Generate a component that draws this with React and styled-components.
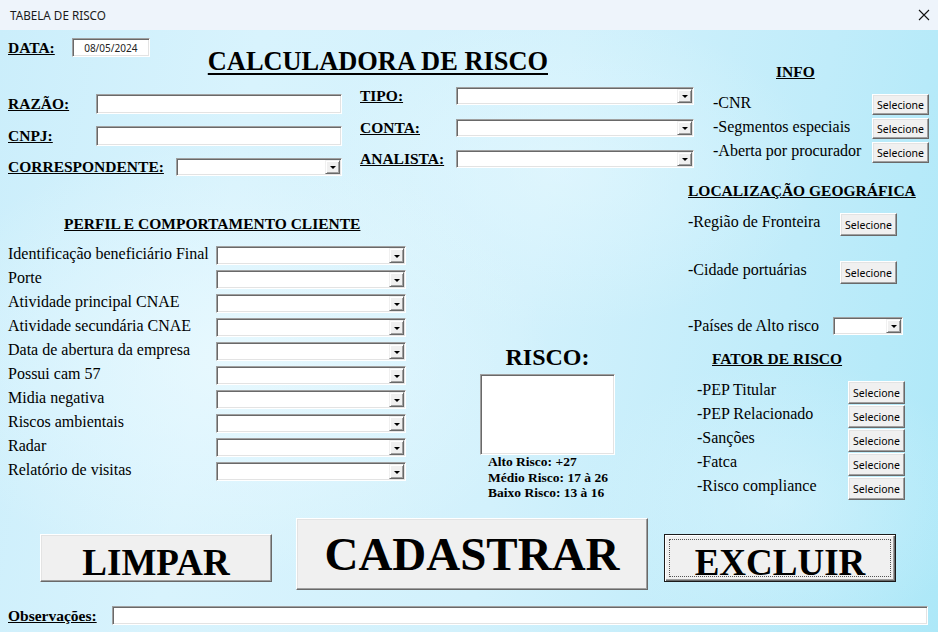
import React from "react";
import styled, { createGlobalStyle } from "styled-components";

const GlobalStyle = createGlobalStyle`
  html, body {
    margin: 0;
    padding: 0;
    overflow: hidden;
  }
  body {
    font-family: "Liberation Serif", "Times New Roman", serif;
    color: #000;
  }
`;

const serif = `"Liberation Serif", "Times New Roman", serif`;
const sans = `"Noto Sans", "Open Sans", Arial, sans-serif`;

const Window = styled("div")`
  width: 938px;
  height: 632px;
  display: flex;
  flex-direction: column;
  overflow: hidden;
`;

const TitleBar = styled("div")`
  height: 30px;
  flex-shrink: 0;
  background: #eef4fb;
  display: flex;
  align-items: center;
  justify-content: space-between;
  padding: 0 8px 0 10px;
`;

const TitleText = styled("span")`
  font-family: ${sans};
  font-size: 11.7px;
  color: #1a1a1a;
`;

const Body = styled("div")`
  flex: 1;
  display: flex;
  flex-direction: column;
  background:
    radial-gradient(ellipse 320px 220px at 230px 330px, rgba(236, 250, 255, 0.75), transparent),
    radial-gradient(ellipse 260px 160px at 560px 140px, rgba(232, 249, 255, 0.55), transparent),
    radial-gradient(ellipse 200px 140px at 780px 470px, rgba(220, 245, 253, 0.5), transparent),
    linear-gradient(100deg, #cbeefb 0%, #d8f3fd 25%, #d2f1fc 55%, #c0ecfa 80%, #ade8f8 100%);
`;

const Top = styled("div")`
  height: 488px;
  display: flex;
  flex-shrink: 0;
`;

const LeftPane = styled("div")`
  width: 688px;
  flex-shrink: 0;
  padding-left: 8px;
  box-sizing: border-box;
`;

const HeaderRow = styled("div")`
  display: flex;
  align-items: flex-start;
  padding-top: 8px;
`;

const DataGroup = styled("div")`
  display: flex;
  align-items: center;
  gap: 17px;
`;

const Label = styled("span")`
  font-family: ${serif};
  font-weight: bold;
  font-size: 15.5px;
  line-height: 18px;
  text-decoration: underline;
  width: ${(p) => (p.$w ? `${p.$w}px` : "auto")};
  flex-shrink: 0;
`;

const MainTitle = styled("h1")`
  margin: 8px 0 0 58px;
  font-family: ${serif};
  font-weight: bold;
  font-size: 26.4px;
  line-height: 30px;
  text-decoration: underline;
  text-decoration-thickness: 2px;
  text-underline-offset: 3px;
  white-space: nowrap;
`;

const TextBox = styled("input")`
  width: ${(p) => p.$w}px;
  height: ${(p) => p.$h || 20}px;
  box-sizing: border-box;
  margin: 0;
  padding: 0 2px;
  background: #fff;
  border: 1px solid;
  border-color: #a0a0a0 #fff #fff #a0a0a0;
  box-shadow: inset 1px 1px 0 #696969, inset -1px -1px 0 #e3e3e3;
  font-family: ${sans};
  font-size: 10px;
  color: #222;
  text-align: ${(p) => (p.$center ? "center" : "left")};
  outline: none;
  flex-shrink: 0;
`;

const ComboBox = styled("div")`
  width: ${(p) => p.$w}px;
  height: ${(p) => p.$h || 18}px;
  box-sizing: border-box;
  background: #fff;
  border: 1px solid;
  border-color: #a0a0a0 #fff #fff #a0a0a0;
  box-shadow: inset 1px 1px 0 #696969, inset -1px -1px 0 #e3e3e3;
  display: flex;
  justify-content: flex-end;
  padding: 1px;
  flex-shrink: 0;
`;

const ComboArrow = styled("div")`
  width: 15px;
  height: 100%;
  box-sizing: border-box;
  background: #f0f0f0;
  border: 1px solid;
  border-color: #f0f0f0 #696969 #696969 #f0f0f0;
  box-shadow: inset 1px 1px 0 #fff, inset -1px -1px 0 #a0a0a0;
  display: flex;
  align-items: center;
  justify-content: center;

  &::after {
    content: "";
    width: 0;
    height: 0;
    margin-top: 1px;
    border-left: 3px solid transparent;
    border-right: 3px solid transparent;
    border-top: 3px solid #000;
  }
`;

const Combo = ({ w, h }) => (
  <ComboBox $w={w} $h={h}>
    <ComboArrow />
  </ComboBox>
);

const FieldsRow = styled("div")`
  display: flex;
  margin-top: 11px;
`;

const FieldCol = styled("div")`
  width: 334px;
  flex-shrink: 0;
  display: flex;
  flex-direction: column;
  gap: ${(p) => p.$gap}px;
  padding-top: ${(p) => p.$pt || 0}px;
  margin-left: ${(p) => p.$ml || 0}px;
`;

const FieldRow = styled("div")`
  display: flex;
  align-items: center;
`;

const LowerRow = styled("div")`
  display: flex;
  margin-top: 39px;
`;

const PerfilCol = styled("div")`
  width: 398px;
  flex-shrink: 0;
`;

const SectionTitle = styled("div")`
  font-family: ${serif};
  font-weight: bold;
  font-size: 15.5px;
  line-height: 18px;
  text-decoration: underline;
  white-space: nowrap;
  margin-left: ${(p) => p.$ml || 0}px;
  margin-top: ${(p) => p.$mt || 0}px;
`;

const PerfilList = styled("div")`
  margin-top: 13px;
  display: flex;
  flex-direction: column;
  gap: 5px;
`;

const PerfilRow = styled("div")`
  display: flex;
  align-items: flex-start;
  height: 19px;
`;

const PlainLabel = styled("span")`
  font-family: ${serif};
  font-size: 16px;
  line-height: 18px;
  white-space: nowrap;
  width: ${(p) => (p.$w ? `${p.$w}px` : "auto")};
  margin-top: ${(p) => p.$mt || 0}px;
  flex-shrink: 0;
`;

const RiscoCol = styled("div")`
  margin: 128px 0 0 74px;
  width: 135px;
  display: flex;
  flex-direction: column;
  align-items: center;
`;

const RiscoTitle = styled("div")`
  font-family: ${serif};
  font-weight: bold;
  font-size: 24px;
  line-height: 28px;
`;

const RiscoBox = styled("div")`
  margin-top: 3px;
  width: 135px;
  height: 81px;
  box-sizing: border-box;
  background: #fff;
  border: 1px solid;
  border-color: #a0a0a0 #fff #fff #a0a0a0;
  box-shadow: inset 1px 1px 0 #696969, inset -1px -1px 0 #e3e3e3;
`;

const Legend = styled("div")`
  align-self: stretch;
  padding-left: 8px;
  margin-top: -1px;
  font-family: ${serif};
  font-weight: bold;
  font-size: 13.5px;
  line-height: 15.5px;
  white-space: nowrap;
`;

const RightPane = styled("div")`
  flex: 1;
  padding-top: 33px;
`;

const OptionList = styled("div")`
  display: flex;
  flex-direction: column;
  gap: ${(p) => p.$gap}px;
  margin-top: 13px;
`;

const OptionRow = styled("div")`
  display: flex;
  align-items: flex-start;
  padding-left: ${(p) => p.$indent || 0}px;
  margin-top: ${(p) => p.$mt || 0}px;
`;

const SelectButton = styled("button")`
  width: 57px;
  height: ${(p) => p.$h || 23}px;
  box-sizing: border-box;
  margin: 0;
  padding: 0;
  background: #f0f0f0;
  border: 1px solid;
  border-color: #fff #696969 #696969 #fff;
  box-shadow: inset -1px -1px 0 #a0a0a0, inset 1px 1px 0 #e3e3e3;
  font-family: ${sans};
  font-size: 10.5px;
  color: #000;
  flex-shrink: 0;
`;

const ButtonsRow = styled("div")`
  display: flex;
  align-items: flex-start;
  padding-left: 40px;
`;

const BigButton = styled("button")`
  position: relative;
  width: ${(p) => p.$w}px;
  height: ${(p) => p.$h}px;
  margin: ${(p) => p.$mt || 0}px 0 0 ${(p) => p.$ml || 0}px;
  box-sizing: border-box;
  padding: ${(p) => p.$pt || 0}px 0 0 0;
  background: #f0f0f0;
  border: 1px solid;
  border-color: ${(p) => (p.$focus ? "#1a1a1a" : "#fff #696969 #696969 #fff")};
  box-shadow: ${(p) =>
    p.$focus
      ? "inset 1px 1px 0 #fff, inset -1px -1px 0 #696969, inset -2px -2px 0 #a0a0a0"
      : "inset -1px -1px 0 #a0a0a0, inset 1px 1px 0 #e3e3e3"};
  font-family: ${serif};
  font-weight: bold;
  font-size: ${(p) => p.$size}px;
  line-height: 1;
  color: #000;
  flex-shrink: 0;

  &::after {
    content: "";
    display: ${(p) => (p.$focus ? "block" : "none")};
    position: absolute;
    inset: 4px;
    border: 1px dotted #555;
  }
`;

const ObsRow = styled("div")`
  display: flex;
  align-items: center;
  padding-left: 8px;
  margin-top: 16px;
`;

const CloseIcon = () => (
  <svg width="12" height="12" viewBox="0 0 12 12">
    <path d="M1 1 L11 11 M11 1 L1 11" stroke="#111" strokeWidth="1.1" fill="none" />
  </svg>
);

const perfil = [
  "Identificação beneficiário Final",
  "Porte",
  "Atividade principal CNAE",
  "Atividade secundária CNAE",
  "Data de abertura da empresa",
  "Possui cam 57",
  "Midia negativa",
  "Riscos ambientais",
  "Radar",
  "Relatório de visitas",
];

const info = ["-CNR", "-Segmentos especiais", "-Aberta por procurador"];
const fatores = ["-PEP Titular", "-PEP Relacionado", "-Sanções", "-Fatca", "-Risco compliance"];

export default function App() {
  return (
    <Window>
      <GlobalStyle />
      <TitleBar>
        <TitleText>TABELA DE RISCO</TitleText>
        <CloseIcon />
      </TitleBar>
      <Body>
        <Top>
          <LeftPane>
            <HeaderRow>
              <DataGroup>
                <Label>DATA:</Label>
                <TextBox $w={78} $h={19} $center defaultValue="08/05/2024" />
              </DataGroup>
              <MainTitle>CALCULADORA DE RISCO</MainTitle>
            </HeaderRow>

            <FieldsRow>
              <FieldCol $gap={12} $pt={7}>
                <FieldRow>
                  <Label $w={88}>RAZÃO:</Label>
                  <TextBox $w={246} />
                </FieldRow>
                <FieldRow>
                  <Label $w={88}>CNPJ:</Label>
                  <TextBox $w={246} />
                </FieldRow>
                <FieldRow>
                  <Label $w={168}>CORRESPONDENTE:</Label>
                  <Combo w={166} />
                </FieldRow>
              </FieldCol>
              <FieldCol $gap={13.5} $ml={18}>
                {["TIPO:", "CONTA:", "ANALISTA:"].map((t) => (
                  <FieldRow key={t}>
                    <Label $w={96}>{t}</Label>
                    <Combo w={238} />
                  </FieldRow>
                ))}
              </FieldCol>
            </FieldsRow>

            <LowerRow>
              <PerfilCol>
                <SectionTitle $ml={56}>PERFIL E COMPORTAMENTO CLIENTE</SectionTitle>
                <PerfilList>
                  {perfil.map((p) => (
                    <PerfilRow key={p}>
                      <PlainLabel $w={208} $mt={-1}>{p}</PlainLabel>
                      <Combo w={190} h={19} />
                    </PerfilRow>
                  ))}
                </PerfilList>
              </PerfilCol>
              <RiscoCol>
                <RiscoTitle>RISCO:</RiscoTitle>
                <RiscoBox />
                <Legend>
                  Alto Risco: +27
                  <br />
                  Médio Risco: 17 à 26
                  <br />
                  Baixo Risco: 13 à 16
                </Legend>
              </RiscoCol>
            </LowerRow>
          </LeftPane>

          <RightPane>
            <SectionTitle $ml={88}>INFO</SectionTitle>
            <OptionList $gap={3}>
              {info.map((t) => (
                <OptionRow key={t} $indent={25}>
                  <PlainLabel $w={159}>{t}</PlainLabel>
                  <SelectButton $h={21}>Selecione</SelectButton>
                </OptionRow>
              ))}
            </OptionList>

            <SectionTitle $mt={19}>LOCALIZAÇÃO GEOGRÁFICA</SectionTitle>
            <OptionRow $mt={13}>
              <PlainLabel $w={152}>-Região de Fronteira</PlainLabel>
              <SelectButton>Selecione</SelectButton>
            </OptionRow>
            <OptionRow $mt={25}>
              <PlainLabel $w={152}>-Cidade portuárias</PlainLabel>
              <SelectButton>Selecione</SelectButton>
            </OptionRow>
            <OptionRow $mt={33}>
              <PlainLabel $w={145}>-Países de Alto risco</PlainLabel>
              <Combo w={70} />
            </OptionRow>

            <SectionTitle $ml={24} $mt={15}>FATOR DE RISCO</SectionTitle>
            <OptionList $gap={1}>
              {fatores.map((t) => (
                <OptionRow key={t} $indent={9}>
                  <PlainLabel $w={151}>{t}</PlainLabel>
                  <SelectButton>Selecione</SelectButton>
                </OptionRow>
              ))}
            </OptionList>
          </RightPane>
        </Top>

        <ButtonsRow>
          <BigButton $w={232} $h={48} $mt={16} $pt={8} $size={37}>
            LIMPAR
          </BigButton>
          <BigButton $w={352} $h={72} $ml={24} $size={47}>
            CADASTRAR
          </BigButton>
          <BigButton $w={232} $h={48} $mt={16} $ml={16} $pt={8} $size={37} $focus>
            EXCLUIR
          </BigButton>
        </ButtonsRow>

        <ObsRow>
          <Label $w={104}>Observações:</Label>
          <TextBox $w={816} $h={19} />
        </ObsRow>
      </Body>
    </Window>
  );
}
